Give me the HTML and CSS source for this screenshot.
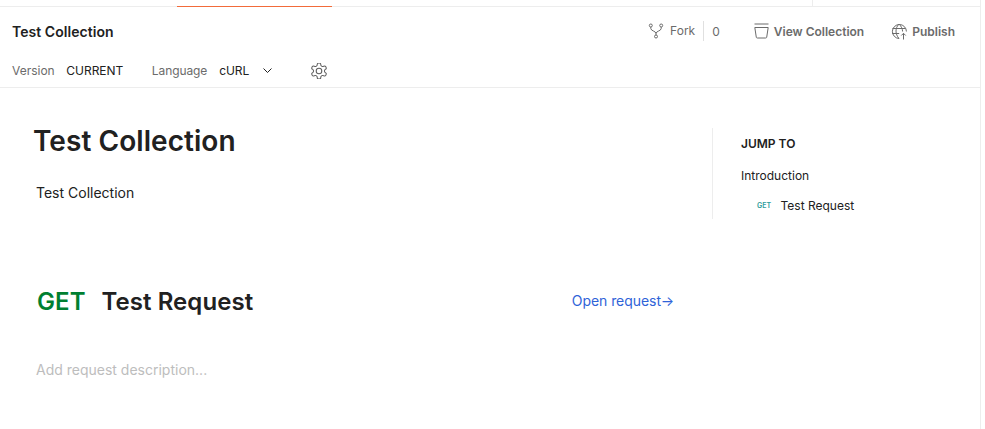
FILE: index.html
```html
<!DOCTYPE html>
<html lang="en">
<head>
  <meta charset="UTF-8" />
  <title>Test Collection</title>
  <link rel="stylesheet" href="styles.css">
</head>
<body>
  <div class="page">
    <div class="top-strip">
      <div class="active-tab"></div>
      <div class="strip-divider"></div>
    </div>

    <header class="header">
      <div class="header-row">
        <div class="collection-name">Test Collection</div>
        <div class="actions">
          <div class="fork">
            <svg class="icon" width="16" height="16" viewBox="0 0 16 16" fill="none" stroke="#6b6b6b" stroke-width="1">
              <circle cx="2.8" cy="2.5" r="1.5"></circle>
              <circle cx="13.2" cy="2.5" r="1.5"></circle>
              <circle cx="8" cy="13.5" r="1.5"></circle>
              <path d="M2.8 4v1.5c0 2.500 5.200 2.500 5.200 5v1.500M13.200 4v1.500c0 2.500-5.200 2.500-5.200 5"></path>
            </svg>
            <span class="fork-label">Fork</span>
            <span class="fork-count">0</span>
          </div>
          <div class="action view-action">
            <svg class="icon" width="15" height="16" viewBox="0 0 15 16" fill="none" stroke="#6b6b6b" stroke-width="1">
              <path d="M.5 1h14"></path>
              <path d="M.8 4.500h13.400l-1.500 9.800a1 1 0 0 1-1 .7h-8.400a1 1 0 0 1-1-.7z"></path>
            </svg>
            <span>View Collection</span>
          </div>
          <div class="action publish-action">
            <svg class="icon" width="17" height="17" viewBox="0 0 17 17" fill="none" stroke="#6b6b6b" stroke-width="1">
              <path d="M8 15.500a7 7 0 1 1 7.400-7"></path>
              <path d="M1.500 5.500h13M1.200 10.500h7M8 1c-4 4-4 10 0 14.500M8 1c2.500 2.500 3.500 5 3.600 7.500"></path>
              <path d="M12.500 16.500v-6M10.300 12.500l2.200-2.200 2.200 2.200"></path>
            </svg>
            <span>Publish</span>
          </div>
        </div>
      </div>
      <div class="options-row">
        <span class="option-label">Version</span>
        <span class="option-value version-value">CURRENT</span>
        <span class="option-label language-label">Language</span>
        <span class="option-value lang-value">cURL</span>
        <svg class="chevron" width="9" height="5" viewBox="0 0 9 5" fill="none" stroke="#212121" stroke-width="1">
          <path d="M.5.500l4 4 4-4"></path>
        </svg>
        <svg class="gear" width="16" height="16" viewBox="2 2 20 20" fill="none" stroke="#5f5f5f" stroke-width="1.300">
          <circle cx="12" cy="12" r="3.500"></circle>
          <path d="M12.220 2h-.44a2 2 0 0 0-2 2v.18a2 2 0 0 1-1 1.730l-.43.25a2 2 0 0 1-2 0l-.15-.08a2 2 0 0 0-2.730.73l-.22.38a2 2 0 0 0 .73 2.730l.15.1a2 2 0 0 1 1 1.720v.51a2 2 0 0 1-1 1.740l-.15.09a2 2 0 0 0-.73 2.730l.22.38a2 2 0 0 0 2.730.73l.15-.08a2 2 0 0 1 2 0l.43.25a2 2 0 0 1 1 1.730V20a2 2 0 0 0 2 2h.44a2 2 0 0 0 2-2v-.18a2 2 0 0 1 1-1.730l.43-.25a2 2 0 0 1 2 0l.15.08a2 2 0 0 0 2.730-.73l.22-.39a2 2 0 0 0-.73-2.730l-.15-.08a2 2 0 0 1-1-1.740v-.5a2 2 0 0 1 1-1.740l.15-.09a2 2 0 0 0 .73-2.730l-.22-.38a2 2 0 0 0-2.730-.73l-.15.08a2 2 0 0 1-2 0l-.43-.25a2 2 0 0 1-1-1.730V4a2 2 0 0 0-2-2z"></path>
        </svg>
      </div>
    </header>

    <main class="content">
      <div class="intro-row">
        <section class="intro">
          <h1>Test Collection</h1>
          <p class="intro-text">Test Collection</p>
        </section>
        <nav class="jump">
          <div class="jump-title">JUMP TO</div>
          <div class="jump-link">Introduction</div>
          <div class="jump-request">
            <span class="jump-method">GET</span>
            <span>Test Request</span>
          </div>
        </nav>
      </div>

      <section class="request">
        <div class="request-head">
          <h2><span class="method">GET</span>Test Request</h2>
          <a class="open-link" href="#">Open request→</a>
        </div>
        <p class="request-desc">Add request description...</p>
      </section>
    </main>
  </div>
</body>
</html>
```

FILE: styles.css
```css
* { box-sizing: border-box; margin: 0; padding: 0; }

html, body {
  height: 100%;
  overflow: hidden;
}

body {
  background: #fff;
  color: #212121;
  font-family: Inter, "Open Sans", sans-serif;
}

.page {
  width: 981px;
  height: 100%;
  border-right: 1px solid #ededed;
}

/* Tab strip cut off at the top */
.top-strip {
  height: 7px;
  border-bottom: 1px solid #ededed;
  display: flex;
}

.active-tab {
  width: 155px;
  height: 7px;
  margin-left: 177px;
  border-bottom: 1px solid #f26b3a;
}

.strip-divider {
  width: 1px;
  height: 6px;
  margin-left: 480px;
  background: #ededed;
}

.header {
  height: 81px;
  border-bottom: 1px solid #ededed;
  padding: 0 12px;
}

.header-row {
  display: flex;
  justify-content: space-between;
  align-items: center;
  height: 48px;
}

.collection-name {
  font-size: 14px;
  font-weight: 600;
  letter-spacing: 0.05px;
}

.actions {
  display: flex;
  align-items: center;
  font-size: 12px;
  font-weight: 600;
  color: #6b6b6b;
  padding-right: 13px;
}

.fork {
  display: flex;
  align-items: center;
  font-weight: 400;
  margin-right: 34px;
}

.fork-label {
  margin-left: 6px;
  padding-right: 8px;
  border-right: 1px solid #e0e0e0;
  line-height: 20px;
}

.fork-count {
  margin-left: 8px;
}

.action {
  display: flex;
  align-items: center;
  gap: 5px;
}

.view-action {
  margin-right: 27px;
}

.publish-action {
  gap: 4px;
}

.options-row {
  display: flex;
  align-items: center;
  height: 30px;
  padding-top: 1px;
  font-size: 12px;
}

.option-label {
  color: #6b6b6b;
}

.option-value {
  color: #212121;
  margin-left: 12px;
}

.version-value {
  margin-left: 11.500px;
  margin-right: 28.500px;
}

.language-label {
  letter-spacing: -0.1px;
}

.lang-value {
  letter-spacing: -0.1px;
}

.chevron {
  margin-left: 14px;
}

.gear {
  margin-left: 39px;
}

.content {
  padding: 0 0 0 34px;
}

.intro-row {
  display: flex;
  margin-top: 40px;
}

.intro {
  width: 678px;
}

h1 {
  font-size: 28px;
  font-weight: 600;
  line-height: 28px;
  letter-spacing: 0.06px;
  margin: -1px 0 0 -1px;
}

.intro-text {
  font-size: 14px;
  line-height: 20px;
  margin: 28px 0 0 2px;
}

.jump {
  width: 200px;
  height: 91px;
  border-left: 1px solid #ededed;
  padding-left: 28px;
  font-size: 12px;
}

.jump-title {
  font-weight: 600;
  line-height: 16px;
  margin-top: 8px;
}

.jump-link {
  line-height: 16px;
  margin-top: 16px;
}

.jump-request {
  display: flex;
  align-items: center;
  line-height: 16px;
  margin: 14px 0 0 16px;
}

.jump-method {
  width: 23.500px;
  font-size: 7px;
  font-weight: 600;
  color: #2f9c9c;
}

.request {
  margin-top: 67px;
  padding-left: 3px;
}

.request-head {
  display: flex;
  justify-content: space-between;
  align-items: center;
  width: 637px;
}

h2 {
  font-size: 24px;
  font-weight: 600;
  line-height: 32px;
  letter-spacing: 0.06px;
}

.method {
  color: #007f31;
  margin-right: 16px;
}

.open-link {
  color: #2f63d8;
  font-size: 14px;
  letter-spacing: -0.05px;
  text-decoration: none;
  margin-bottom: 3px;
}

.request-desc {
  font-size: 14px;
  line-height: 20px;
  color: #bdbdbd;
  margin: 42px 0 0 -1px;
}
```
